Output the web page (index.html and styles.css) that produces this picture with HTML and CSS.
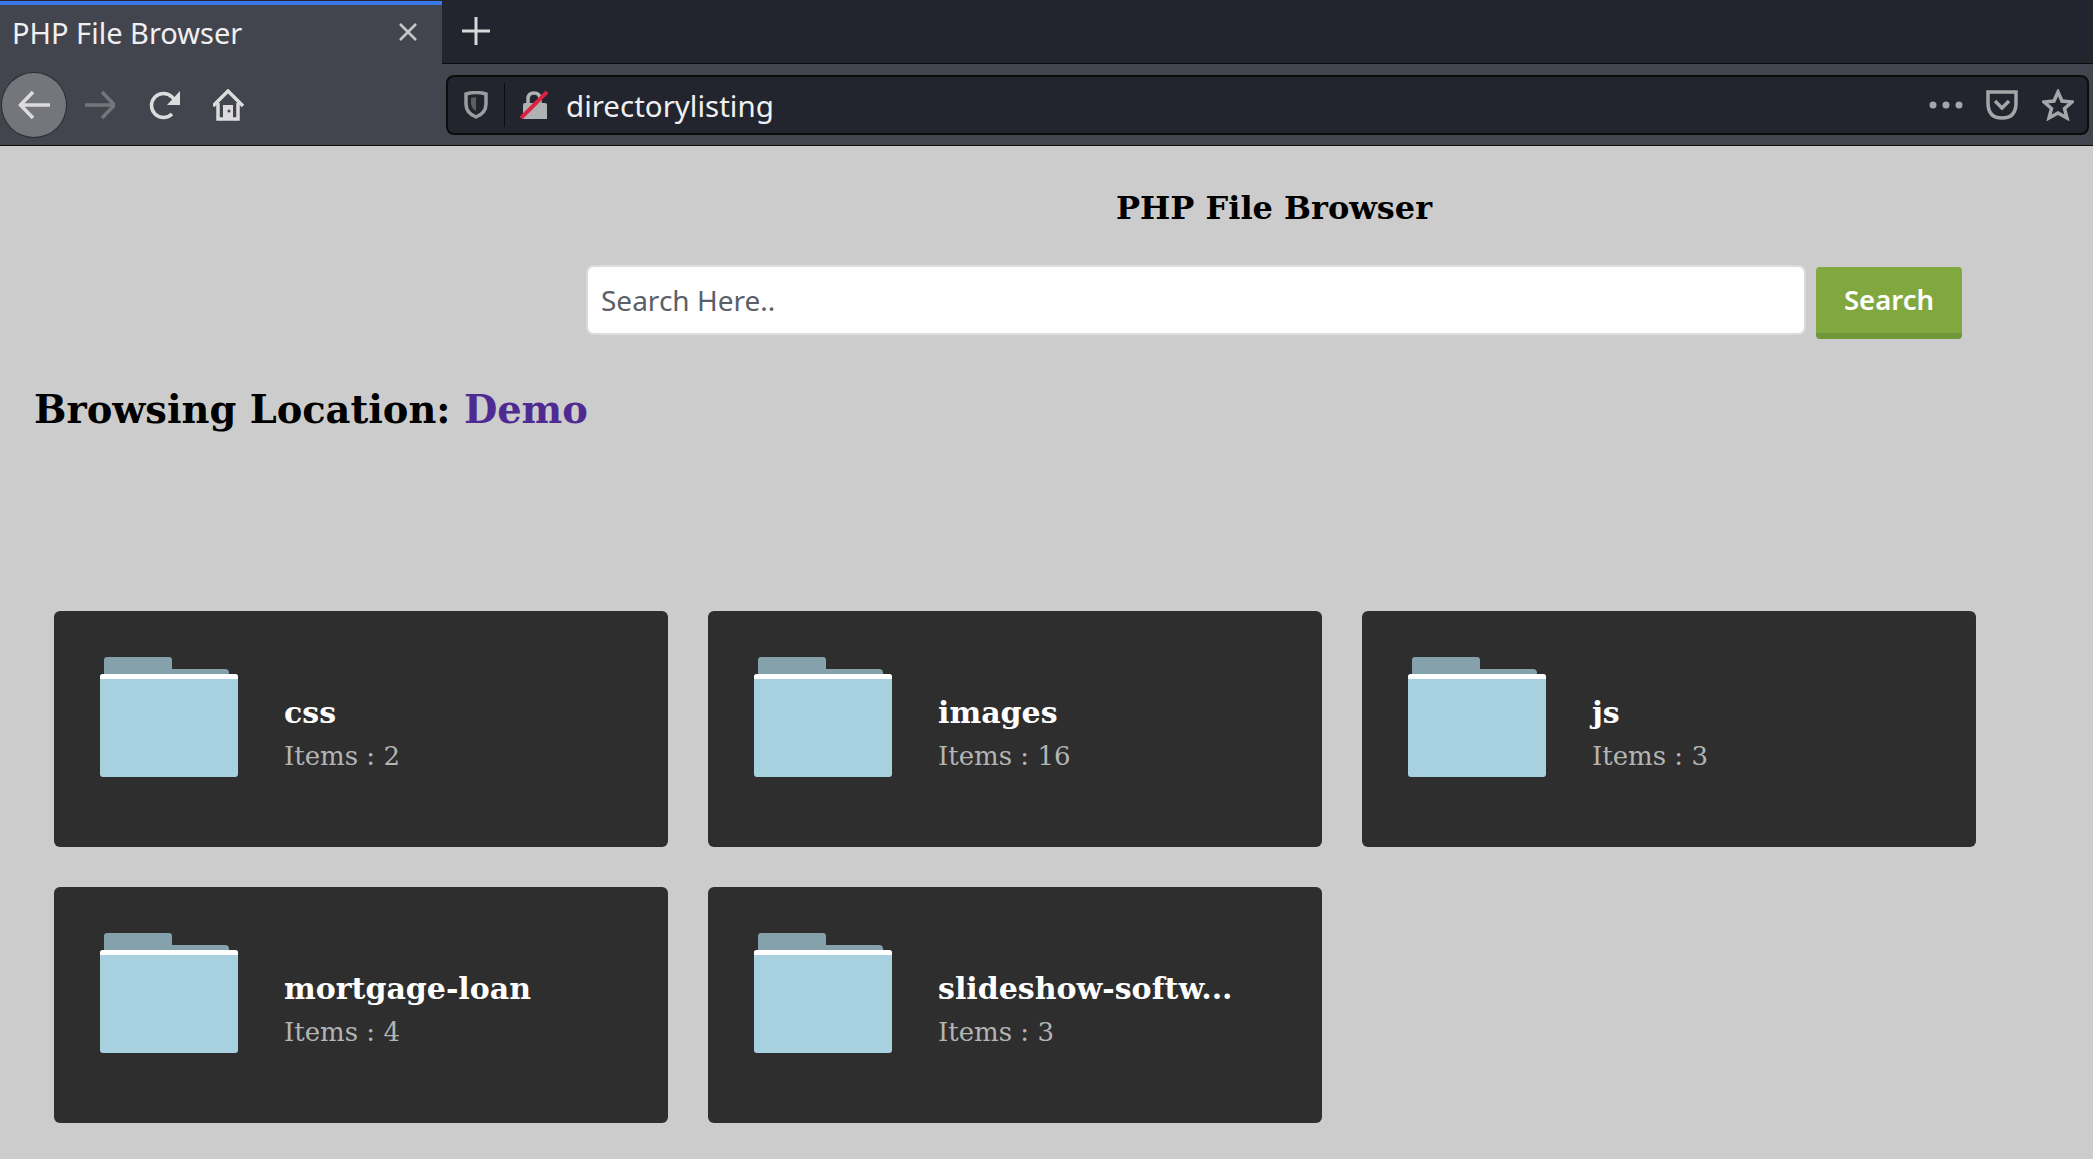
FILE: index.html
```html
<!DOCTYPE html>
<html lang="en">
<head>
    <meta charset="UTF-8">
    <title>PHP File Browser</title>
    <link rel="stylesheet" href="styles.css">
</head>
<body>
    <div class="tabstrip">
        <div class="tab">
            <span class="tab-title">PHP File Browser</span>
            <svg class="tab-close" viewBox="0 0 20 20"><path d="M2 2 18 18M18 2 2 18"/></svg>
        </div>
        <svg class="new-tab" viewBox="0 0 30 30"><path d="M15 1V29M1 15H29"/></svg>
    </div>
    <div class="toolbar">
        <div class="nav">
            <div class="nav-btn back">
                <svg viewBox="0 0 32 32"><path d="M32 16H3M15 3 2.500 16 15 29"/></svg>
            </div>
            <div class="nav-btn dim">
                <svg viewBox="-1 0 32 32"><path d="M1 16H30M18 3 30.500 16 18 29"/></svg>
            </div>
            <div class="nav-btn">
                <svg viewBox="-1 0 32 32"><path d="M23 25A12 12 0 1 1 23 8L28 13"/><path class="fill" d="M31 2V16H18Z"/></svg>
            </div>
            <div class="nav-btn">
                <svg viewBox="1 0 32 32"><path d="M1 17 16 2 31 17M6 14V30H26V14"/><path class="fill" d="M11 16H21V31H11Z"/><circle class="door-dot" cx="17" cy="22" r="1.500"/></svg>
            </div>
        </div>
        <div class="urlbar">
            <svg class="shield" viewBox="0 0 24 28"><path d="M2 3Q12 0 22 3V13Q22 22 12 26 2 22 2 13Z"/><path class="shield-half" d="M7 7 12 6V20Q7 17 7 12Z"/></svg>
            <span class="url-sep"></span>
            <svg class="lock" viewBox="0 0 28 28"><path class="lock-body" d="M3 14Q3 12 5 12H25Q27 12 27 14V28H3Z"/><path class="lock-arc" d="M8 12V8Q8 2 14 2 20 2 20 8V12"/><path class="lock-slash" d="M1 27 27 1"/></svg>
            <span class="url-text">directorylisting</span>
            <svg class="dots" viewBox="0 0 34 8"><circle cx="4" cy="4" r="3.500"/><circle cx="17" cy="4" r="3.500"/><circle cx="30" cy="4" r="3.500"/></svg>
            <svg class="pocket" viewBox="0 0 32 30"><path d="M2 2H30V13Q30 28 16 28 2 28 2 13Z"/><path d="M9 11 16 18 23 11"/></svg>
            <svg class="star" viewBox="0 0 32 32"><path d="M16 3 20 12 30 13 22.500 19.500 25 29 16 24 7 29 9.500 19.500 2 13 12 12Z"/></svg>
        </div>
    </div>

    <div class="page">
        <h1 class="title">PHP File Browser</h1>
        <form class="search">
            <input class="search-input" type="text" placeholder="Search Here..">
            <button class="search-btn" type="button">Search</button>
        </form>
        <h2 class="location">Browsing Location: <a class="location-link" href="#">Demo</a></h2>

        <div class="folders">
            <div class="folder">
                <svg class="folder-icon" viewBox="0 0 138 120"><use href="#folder"/></svg>
                <div class="folder-info">
                    <div class="folder-name">css</div>
                    <div class="folder-items">Items : 2</div>
                </div>
            </div>
            <div class="folder">
                <svg class="folder-icon" viewBox="0 0 138 120"><use href="#folder"/></svg>
                <div class="folder-info">
                    <div class="folder-name">images</div>
                    <div class="folder-items">Items : 16</div>
                </div>
            </div>
            <div class="folder">
                <svg class="folder-icon" viewBox="0 0 138 120"><use href="#folder"/></svg>
                <div class="folder-info">
                    <div class="folder-name">js</div>
                    <div class="folder-items">Items : 3</div>
                </div>
            </div>
            <div class="folder">
                <svg class="folder-icon" viewBox="0 0 138 120"><use href="#folder"/></svg>
                <div class="folder-info">
                    <div class="folder-name">mortgage-loan</div>
                    <div class="folder-items">Items : 4</div>
                </div>
            </div>
            <div class="folder">
                <svg class="folder-icon" viewBox="0 0 138 120"><use href="#folder"/></svg>
                <div class="folder-info">
                    <div class="folder-name">slideshow-softw...</div>
                    <div class="folder-items">Items : 3</div>
                </div>
            </div>
        </div>
    </div>

    <svg class="defs" width="0" height="0">
        <symbol id="folder" viewBox="0 0 138 120">
            <path fill="#84a1ac" d="M4 3Q4 0 7 0H69Q72 0 72 3V12H125Q129 12 129 16V20H4Z"/>
            <path fill="#a8d1e0" d="M0 20Q0 17 3 17H135Q138 17 138 20V117Q138 120 135 120H3Q0 120 0 117Z"/>
            <path fill="#fff" d="M0 22V20Q0 17 3 17H135Q138 17 138 20V22Z"/>
        </symbol>
    </svg>
</body>
</html>
```

FILE: styles.css
```css
body {
    margin: 0;
    background-color: #cccccc;
    font-family: "DejaVu Serif", serif;
}

/* browser chrome */
.tabstrip {
    display: flex;
    align-items: flex-start;
    height: 64px;
    background-color: #22252e;
    box-sizing: border-box;
    border-bottom: 1px solid #0c0c0d;
}
.tab {
    display: flex;
    align-items: center;
    justify-content: space-between;
    box-sizing: border-box;
    width: 442px;
    height: 63px;
    margin-top: 1px;
    padding: 0 24px 5px 12px;
    background-color: #42454e;
    border-top: 4px solid #3a78e8;
    color: #f0f0f2;
    font-family: "Noto Sans", sans-serif;
    font-size: 29px;
}
.tab-close {
    width: 20px;
    height: 20px;
    fill: none;
    stroke: #c8c8cc;
    stroke-width: 2.500;
}
.new-tab {
    width: 30px;
    height: 30px;
    margin: 16px 0 0 19px;
    fill: none;
    stroke: #d8d8da;
    stroke-width: 3;
}
.toolbar {
    display: flex;
    align-items: center;
    height: 81px;
    background-color: #42454e;
    border-bottom: 1px solid #0c0c0d;
}
.nav {
    display: flex;
    align-items: center;
    gap: 1px;
    width: 446px;
    padding-left: 2px;
    box-sizing: border-box;
}
.nav-btn {
    display: flex;
    align-items: center;
    justify-content: center;
    width: 64px;
    height: 64px;
}
.nav-btn svg {
    width: 32px;
    height: 32px;
    fill: none;
    stroke: #dcdcde;
    stroke-width: 3.500;
}
.nav-btn .fill {
    fill: #dcdcde;
    stroke: none;
}
.nav-btn .door-dot {
    fill: #42454e;
    stroke: none;
}
.back {
    border-radius: 50%;
    background-color: #74767b;
    box-shadow: 0 0 0 1px #2b2d33;
}
.dim svg {
    stroke: #74767b;
}
.urlbar {
    display: flex;
    align-items: center;
    box-sizing: border-box;
    width: 1643px;
    height: 60px;
    padding: 0 13px 0 16px;
    background-color: #22252e;
    border: 2px solid #0c0c0d;
    border-radius: 8px;
    color: #f0f0f2;
    font-family: "Noto Sans", sans-serif;
    font-size: 29.500px;
}
.shield {
    width: 24px;
    height: 28px;
    fill: none;
    stroke: #9c9da0;
    stroke-width: 3.500;
}
.shield-half {
    fill: #5c5e64;
    stroke: none;
}
.url-sep {
    width: 1px;
    height: 44px;
    margin: 0 15px 0 16px;
    background-color: #0c0c0d;
}
.lock {
    width: 28px;
    height: 28px;
    fill: none;
}
.lock-body {
    fill: #b0b1b3;
}
.lock-arc {
    stroke: #b0b1b3;
    stroke-width: 3.500;
}
.lock-slash {
    stroke: #dc2140;
    stroke-width: 4;
}
.url-text {
    flex: 1;
    margin-left: 18px;
    padding-top: 2px;
}
.dots {
    width: 34px;
    height: 8px;
    fill: #a5a6a9;
}
.pocket {
    width: 32px;
    height: 30px;
    margin-left: 23px;
    fill: none;
    stroke: #a5a6a9;
    stroke-width: 3.500;
}
.star {
    width: 32px;
    height: 32px;
    margin-left: 24px;
    fill: none;
    stroke: #a5a6a9;
    stroke-width: 3.500;
}
.defs {
    position: absolute;
}

/* page */
.page {
    padding: 0 0 37px 54px;
}
.title {
    margin: 0;
    padding: 44px 0 0 1062px;
    font-size: 32px;
    line-height: 36px;
    font-weight: bold;
    color: #000;
}
.search {
    display: flex;
    align-items: flex-start;
    margin: 39px 0 0 532px;
}
.search-input {
    box-sizing: border-box;
    width: 1220px;
    height: 70px;
    padding: 0 13px;
    border: 2px solid #dcdcdc;
    border-radius: 8px;
    background-color: #fff;
    font-family: "Noto Sans", sans-serif;
    font-size: 28px;
}
.search-input::placeholder {
    color: #5b6068;
    opacity: 1;
}
.search-btn {
    box-sizing: border-box;
    width: 146px;
    height: 72px;
    margin: 2px 0 0 10px;
    padding: 0 0 2px;
    border: none;
    border-bottom: 6px solid #6f973a;
    border-radius: 4px;
    background-color: #81a83f;
    color: #fff;
    font-family: "Noto Sans", sans-serif;
    font-size: 27.500px;
    font-weight: 600;
}
.location {
    margin: 47px 0 0 -20px;
    font-size: 38.400px;
    line-height: 48px;
    font-weight: bold;
    color: #000;
}
.location-link {
    color: #4f2a93;
    text-decoration: none;
}
.folders {
    display: grid;
    grid-template-columns: repeat(3, 614px);
    gap: 40px;
    margin-top: 177px;
}
.folder {
    display: flex;
    box-sizing: border-box;
    height: 236px;
    padding: 46px 0 0 46px;
    border-radius: 6px;
    background-color: #2e2e2e;
}
.folder-icon {
    width: 138px;
    height: 120px;
}
.folder-info {
    margin: 36px 0 0 46px;
}
.folder-name {
    font-size: 30px;
    line-height: 40px;
    font-weight: bold;
    color: #fff;
}
.folder-items {
    padding-top: 1px;
    font-size: 26px;
    line-height: 44px;
    color: #b4b4b4;
}
```
